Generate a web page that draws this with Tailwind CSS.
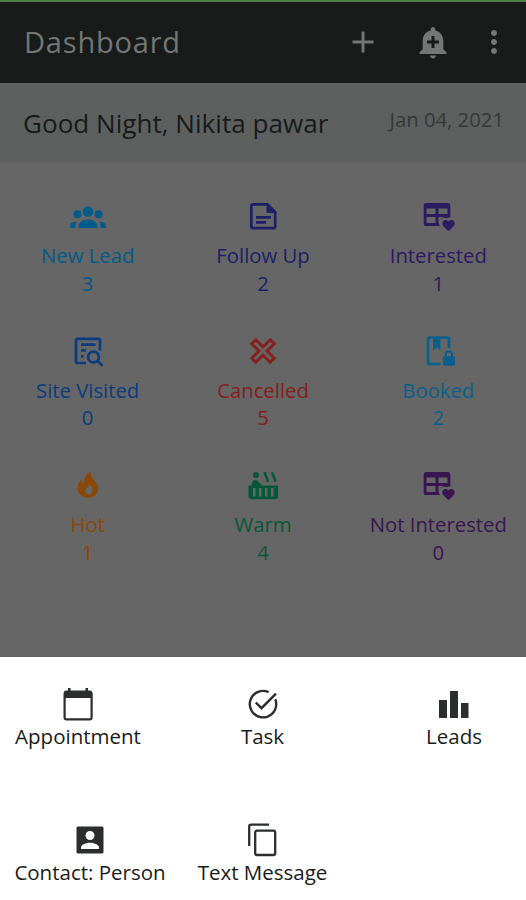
<!DOCTYPE html>
<html lang="en">
<head>
	<meta charset="UTF-8">
	<meta name="viewport" content="width=device-width, initial-scale=1.0">
	<title>Dashboard</title>
	<script src="https://cdn.jsdelivr.net/npm/@tailwindcss/browser@4"></script>
</head>
<body class="h-screen overflow-hidden flex flex-col bg-[#666666] font-['Open_Sans','Noto_Sans',sans-serif]">
	<header class="h-[83px] shrink-0 flex items-center border-t-2 border-[#4c7f47] bg-[#181b1a] pl-6 pr-3.5 pb-px text-[#747675]">
		<h1 class="flex-1 text-[29px] leading-10 tracking-[0.8px]">Dashboard</h1>
		<svg class="size-9 mr-[34px]" viewBox="0 0 24 24" fill="currentColor"><path d="M19 13h-6v6h-2v-6H5v-2h6V5h2v6h6v2z"/></svg>
		<svg class="size-9 mr-[25px]" viewBox="0 0 24 24" fill="currentColor"><path d="M10.01 21.01c0 1.1.89 1.99 1.99 1.99s1.99-.89 1.99-1.99h-3.98zm8.87-4.19V11c0-3.25-2.25-5.97-5.29-6.69v-.72C13.59 2.71 12.88 2 12 2s-1.59.71-1.59 1.59v.72C7.37 5.03 5.12 7.75 5.12 11v5.82L3 18.94V20h18v-1.06l-2.12-2.12zM16 13.01h-3v3h-2v-3H8V11h3V8h2v3h3v2.01z"/></svg>
		<svg class="size-9" viewBox="0 0 24 24" fill="currentColor"><path d="M12 8c1.1 0 2-.9 2-2s-.9-2-2-2-2 .9-2 2 .9 2 2 2zm0 2c-1.1 0-2 .9-2 2s.9 2 2 2 2-.9 2-2-.9-2-2-2zm0 6c-1.1 0-2 .9-2 2s.9 2 2 2 2-.9 2-2-.9-2-2-2z"/></svg>
	</header>

	<div class="h-[79px] shrink-0 flex justify-between bg-[#5d605f] pl-[23px] pr-[22px]">
		<p class="mt-5 text-[26.1px] leading-10 text-[#181b1a]">Good Night, Nikita pawar</p>
		<p class="mt-[21px] text-[20.3px] leading-[30px] text-[#363938]">Jan 04, 2021</p>
	</div>

	<main class="flex-1 grid grid-cols-3 auto-rows-[134.5px] pt-[38px] text-center text-[20.3px] leading-[27.5px] whitespace-nowrap">
		<div class="flex flex-col items-center text-[#015b8a]">
			<svg class="w-10 h-8 mb-[10px]" viewBox="0 0 40 32" fill="currentColor">
				<circle cx="20" cy="11.500" r="5.300"/>
				<circle cx="9.500" cy="14.300" r="4"/>
				<circle cx="30.500" cy="14.300" r="4"/>
				<path d="M10.500 28v-1.500C10.500 23 14 19.500 20 19.500s9.500 3.500 9.500 7V28zM2 28v-1.800c0-2.500 2-4.200 6.400-4.700C7.600 23 7.500 25 7.500 28zM38 28v-1.800c0-2.500-2-4.200-6.400-4.700.8 1.500.9 3.500.9 6.500z"/>
			</svg>
			<span>New Lead</span>
			<span>3</span>
		</div>
		<div class="flex flex-col items-center text-[#1d2068]">
			<svg class="w-10 h-8 mb-[10px]" viewBox="0 0 40 32" fill="none" stroke="currentColor" stroke-width="2.700">
				<path d="M24.500 4.300H10.300a2 2 0 0 0-2 2v19.900a2 2 0 0 0 2 2h19.900a2 2 0 0 0 2-2V12z"/>
				<path d="M24 4v8.500h8.500z" fill="currentColor" stroke-width="1"/>
				<path d="M13 17.400h15M13 22.400h10"/>
			</svg>
			<span>Follow Up</span>
			<span>2</span>
		</div>
		<div class="flex flex-col items-center text-[#2d1b62]">
			<svg class="w-10 h-8 mb-[10px]" viewBox="0 0 40 32" fill="currentColor">
				<path d="M8.300 3h21.400a2.600 2.600 0 0 1 2.600 2.600V17.500c-1.500-.3-3 .1-4 .8-1.500-.8-4-.6-6 1.200-1 1-1.500 2.500-1.500 3.800l1 2.700H8.300a2.600 2.600 0 0 1-2.600-2.600V5.600A2.600 2.600 0 0 1 8.300 3zM8.500 8.500v5.500h9V8.500zM20.500 8.500v5.500h9V8.500zM8.500 17v6h9v-6z" fill-rule="evenodd"/>
				<path d="M20.500 17h5.500c-2.500.5-4.500 2.500-4.500 6h-1z" fill="#666666"/>
				<path d="M30.500 31l-.9-.8c-3.200-2.900-5.300-4.600-5.300-7 0-1.900 1.500-3.200 3.200-3.200 1.100 0 2.300.6 3 1.500.7-.9 1.900-1.500 3-1.500 1.700 0 3.200 1.300 3.200 3.200 0 2.400-2.100 4.100-5.300 7z"/>
			</svg>
			<span>Interested</span>
			<span>1</span>
		</div>

		<div class="flex flex-col items-center text-[#093d80]">
			<svg class="w-10 h-8 mb-[10px]" viewBox="0 0 40 32" fill="none" stroke="currentColor" stroke-width="2.700">
				<path d="M18 28H9.200a1.200 1.200 0 0 1-1.200-1.200V5A1.200 1.200 0 0 1 9.200 3.800h21.600A1.200 1.200 0 0 1 32 5v10.500"/>
				<path d="M13 9.700h14.500M13 15.500h5M13 21.300h2.500"/>
				<circle cx="25.500" cy="22" r="5.400"/>
				<path d="M29.300 25.800l5.200 5"/>
			</svg>
			<span>Site Visited</span>
			<span>0</span>
		</div>
		<div class="flex flex-col items-center text-[#85201d]">
			<svg class="w-10 h-8 mb-[10px]" viewBox="0 0 40 32" fill="none" stroke="currentColor" stroke-width="3">
				<path d="M12.800 4.800L20 12l7.200-7.200 4 4L24 16l7.200 7.200-4 4L20 20l-7.200 7.200-4-4L16 16 8.800 8.800z"/>
			</svg>
			<span>Cancelled</span>
			<span>5</span>
		</div>
		<div class="flex flex-col items-center text-[#0a608c]">
			<svg class="w-10 h-8 mb-[10px]" viewBox="0 0 40 32" fill="none" stroke="currentColor" stroke-width="2.700">
				<path d="M22.500 29H11.500a1.500 1.500 0 0 1-1.500-1.500V4a1.500 1.500 0 0 1 1.500-1.500h18A1.500 1.500 0 0 1 31 4v9"/>
				<path d="M15 2h7.500v13.500l-3.700-3-3.800 3z" fill="currentColor" stroke="none"/>
				<rect x="25" y="21" width="12" height="9.800" rx="1.500" fill="currentColor" stroke="none"/>
				<path d="M27.800 21.500v-2a3.100 3.100 0 0 1 6.200 0v2" stroke-width="2"/>
			</svg>
			<span>Booked</span>
			<span>2</span>
		</div>

		<div class="flex flex-col items-center text-[#8a4706]">
			<svg class="w-10 h-8 mb-[10px]" viewBox="0 0 40 32" fill="currentColor">
				<path fill-rule="evenodd" d="M22.500 2.500c-.3 4 1.300 6 3.500 8.700 2.300 2.600 4.200 4.800 4.200 8 0 5.300-4.400 9.500-10.200 9.500S9.700 24.500 9.700 19c0-3.700 1.600-6.500 4-8.700-.2 2.500.4 4.200 1.700 4.900C15.500 10 17.500 5.500 22.500 2.500zM21 15c.4 2.700-3.700 4.200-3.700 7.100 0 2.200 1.600 3.300 3.300 3.300 2.300 0 4-1.700 4-4.100 0-2.300-1.600-4.800-3.600-6.300z"/>
			</svg>
			<span>Hot</span>
			<span>1</span>
		</div>
		<div class="flex flex-col items-center text-[#07583a]">
			<svg class="w-10 h-8 mb-[10px]" viewBox="0 0 40 32" fill="currentColor">
				<circle cx="13" cy="6" r="3"/>
				<path fill-rule="evenodd" d="M8.800 16.500v-2c0-2 1.600-3.500 3.500-3.500 1.200 0 2 .4 2.800 1.200l4.400 4.300H35v11a2.800 2.800 0 0 1-2.800 2.800H8.300a2.800 2.800 0 0 1-2.800-2.800v-11zM10 19v8.500h2.500V19zm6 0v8.500h2.500V19zm6 0v8.500h2.500V19zm6 0v8.500h2.500V19z"/>
				<path d="M22 3c-1 4 3.500 5 2.500 10M29.500 3c-1 4 3.500 5 2.500 10" fill="none" stroke="currentColor" stroke-width="2.600"/>
			</svg>
			<span>Warm</span>
			<span>4</span>
		</div>
		<div class="flex flex-col items-center text-[#3b1552]">
			<svg class="w-10 h-8 mb-[10px]" viewBox="0 0 40 32" fill="currentColor">
				<path d="M8.300 3h21.400a2.600 2.600 0 0 1 2.600 2.600V17.500c-1.500-.3-3 .1-4 .8-1.500-.8-4-.6-6 1.200-1 1-1.500 2.500-1.500 3.800l1 2.700H8.300a2.600 2.600 0 0 1-2.600-2.600V5.600A2.600 2.600 0 0 1 8.300 3zM8.500 8.500v5.500h9V8.500zM20.500 8.500v5.500h9V8.500zM8.500 17v6h9v-6z" fill-rule="evenodd"/>
				<path d="M20.500 17h5.500c-2.500.5-4.500 2.500-4.500 6h-1z" fill="#666666"/>
				<path d="M30.500 31l-.9-.8c-3.200-2.900-5.300-4.600-5.300-7 0-1.900 1.500-3.200 3.200-3.200 1.100 0 2.300.6 3 1.500.7-.9 1.900-1.500 3-1.500 1.700 0 3.200 1.300 3.200 3.200 0 2.400-2.100 4.100-5.300 7z"/>
			</svg>
			<span>Not Interested</span>
			<span>0</span>
		</div>
	</main>

	<!-- Bottom sheet -->
	<section class="h-[243px] shrink-0 bg-white pt-[29px] pl-[15px] pr-11 text-[20.5px] leading-7 text-[#181b1a] whitespace-nowrap">
		<div class="h-[136px] flex justify-between">
			<button class="w-[126px] flex flex-col items-center">
				<svg class="size-9 text-[#2b2e2d]" viewBox="0 0 36 36" fill="none" stroke="currentColor" stroke-width="2.200">
					<rect x="4.600" y="6" width="27" height="27.300" rx="1.800"/>
					<path d="M4 6.500a2 2 0 0 1 2-2h24a2 2 0 0 1 2 2V12H4zM8 2h2.500v4H8zM25.500 2H28v4h-2.500z" fill="currentColor" stroke="none"/>
				</svg>
				Appointment
			</button>
			<button class="flex flex-col items-center mr-[42px]">
				<svg class="size-9 text-[#2b2e2d]" viewBox="0 0 36 36" fill="none" stroke="currentColor" stroke-width="2.400">
					<path d="M23.600 6.200A13.200 13.200 0 1 0 31.200 18c0-1.700-.3-3.200-.9-4.700"/>
					<path d="M10.800 16.500l5.700 5.700L31 7.700"/>
				</svg>
				Task
			</button>
			<button class="flex flex-col items-center">
				<svg class="size-9 text-[#2b2e2d]" viewBox="0 0 36 36" fill="currentColor"><path d="M3 14h8v18H3zM14 5h8v27h-8zM25 17h7.500v15H25z"/></svg>
				Leads
			</button>
		</div>
		<div class="flex gap-[33px]">
			<button class="w-[150px] flex flex-col items-center">
				<svg class="size-9 text-[#2b2e2d]" viewBox="0 0 24 24" fill="currentColor"><path d="M3 4v16c0 .6.400 1 1 1h16c.6 0 1-.4 1-1V4c0-.6-.4-1-1-1H4c-.6 0-1 .4-1 1zm12 5c0 1.660-1.340 3-3 3s-3-1.340-3-3 1.340-3 3-3 3 1.340 3 3zm-9 8c0-2 4-3.100 6-3.100s6 1.100 6 3.100v1H6v-1z"/></svg>
				Contact: Person
			</button>
			<button class="w-[129px] flex flex-col items-center">
				<svg class="size-9 text-[#2b2e2d]" viewBox="0 0 36 36" fill="none" stroke="currentColor" stroke-width="2.300">
					<path d="M24 2.700H6a1.800 1.800 0 0 0-1.800 1.800V24"/>
					<rect x="10.200" y="8.700" width="20" height="24.300" rx="1.800"/>
				</svg>
				Text Message
			</button>
		</div>
	</section>
</body>
</html>
